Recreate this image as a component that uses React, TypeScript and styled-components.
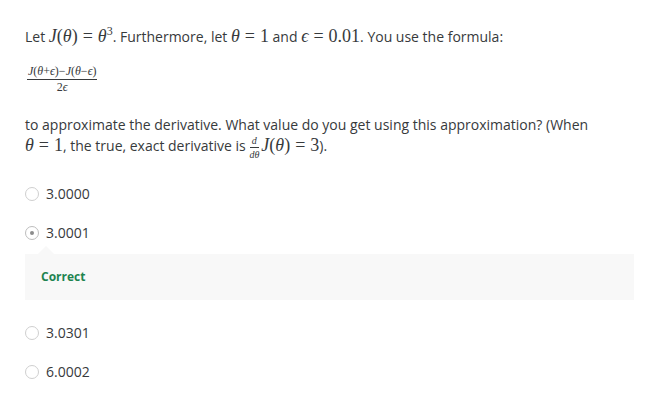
import React from "react";
import styled, { createGlobalStyle } from "styled-components";

const GlobalStyle = createGlobalStyle`
  body {
    margin: 0;
    background: #fff;
    font-family: "Open Sans", "Liberation Sans", sans-serif;
    color: #373a3c;
  }
`;

const Page = styled.div`
  padding: 27px 25px 0 25px;
  width: 609px;
  font-size: 14px;
  line-height: 20px;
`;

const Para = styled.p`
  margin: 0;
`;

const M = styled.span`
  font-family: "Liberation Serif", "DejaVu Serif", serif;
  font-size: 18px;
  line-height: 1;
`;

const Mi = styled.i`
  font-style: italic;
`;

const Eq = styled.span`
  margin: 0 5px;
`;

const Sup = styled.sup`
  font-size: 12px;
  line-height: 0;
  vertical-align: 7px;
`;

const FormulaBlock = styled.div`
  margin: 16px 0 0 2px;
  height: 32px;
  display: flex;
  align-items: center;
`;

const Frac = styled.span<{ $size: number }>`
  display: inline-flex;
  flex-direction: column;
  align-items: center;
  font-family: "Liberation Serif", "DejaVu Serif", serif;
  font-size: ${(p) => p.$size}px;
  line-height: ${(p) => p.$size + 1}px;
  vertical-align: middle;
  margin-right: 2px;
`;

const Num = styled.span<{ $pad?: number }>`
  border-bottom: 1px solid #373a3c;
  padding: 0 ${(p) => p.$pad ?? 1}px 1px;
`;

const Den = styled.span`
  padding-top: 1px;
`;

const Para2 = styled(Para)`
  margin-top: 20px;
  max-width: 600px;
`;

const Options = styled.div`
  margin-top: 24px;
  display: flex;
  flex-direction: column;
`;

const Option = styled.label`
  display: flex;
  align-items: center;
  gap: 7px;
  height: 20px;
  margin-bottom: 19px;
`;

const Radio = styled.span<{ $checked?: boolean }>`
  width: 12px;
  height: 12px;
  border-radius: 50%;
  border: 1px solid ${(p) => (p.$checked ? "#bdbdbd" : "#cfcfcf")};
  background: #fff;
  display: flex;
  align-items: center;
  justify-content: center;
  &::after {
    content: "";
    display: ${(p) => (p.$checked ? "block" : "none")};
    width: 4px;
    height: 4px;
    border-radius: 50%;
    background: #8c8c8c;
  }
`;

const Feedback = styled.div`
  position: relative;
  background: #f8f8f8;
  height: 46px;
  margin: -8px 0 23px 0;
  width: 609px;
  display: flex;
  align-items: center;
  padding-left: 16px;
  box-sizing: border-box;
  &::before {
    content: "";
    position: absolute;
    top: -8px;
    left: 13px;
    border-left: 8px solid transparent;
    border-right: 8px solid transparent;
    border-bottom: 8px solid #f8f8f8;
  }
`;

const Correct = styled.span`
  color: #1e8450;
  font-weight: 700;
  font-size: 12px;
`;

const options = [
  { v: "3.0000" },
  { v: "3.0001", checked: true },
  { v: "3.0301" },
  { v: "6.0002" },
];

export default function App() {
  return (
    <>
      <GlobalStyle />
      <Page>
        <Para>
          Let{" "}
          <M>
            <Mi>J</Mi>(<Mi>θ</Mi>)<Eq>=</Eq><Mi>θ</Mi><Sup>3</Sup>
          </M>
          . Furthermore, let{" "}
          <M>
            <Mi>θ</Mi><Eq>=</Eq>1
          </M>{" "}
          and{" "}
          <M>
            <Mi>ϵ</Mi><Eq>=</Eq>0.01
          </M>
          . You use the formula:
        </Para>
        <FormulaBlock>
          <Frac $size={12}>
            <Num>
              <Mi>J</Mi>(<Mi>θ</Mi>+<Mi>ϵ</Mi>)−<Mi>J</Mi>(<Mi>θ</Mi>−<Mi>ϵ</Mi>)
            </Num>
            <Den>
              2<Mi>ϵ</Mi>
            </Den>
          </Frac>
        </FormulaBlock>
        <Para2>
          to approximate the derivative. What value do you get using this approximation? (When{" "}
          <M>
            <Mi>θ</Mi><Eq>=</Eq>1
          </M>
          , the true, exact derivative is{" "}
          <Frac $size={10}>
            <Num $pad={2}>
              <Mi>d</Mi>
            </Num>
            <Den>
              <Mi>dθ</Mi>
            </Den>
          </Frac>
          <M>
            <Mi>J</Mi>(<Mi>θ</Mi>)<Eq>=</Eq>3
          </M>
          ).
        </Para2>
        <Options>
          {options.map((o) => (
            <React.Fragment key={o.v}>
              <Option>
                <Radio $checked={o.checked} />
                {o.v}
              </Option>
              {o.checked && (
                <Feedback>
                  <Correct>Correct</Correct>
                </Feedback>
              )}
            </React.Fragment>
          ))}
        </Options>
      </Page>
    </>
  );
}
